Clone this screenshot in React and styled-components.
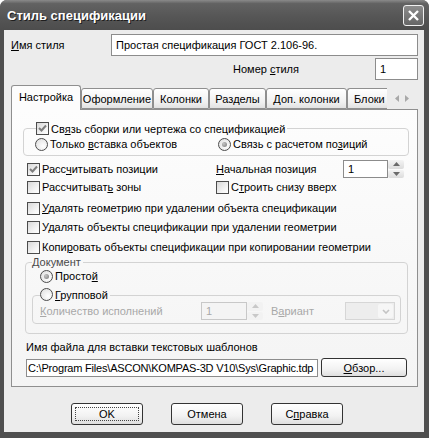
import React from "react";
import styled, { createGlobalStyle } from "styled-components";

const GlobalStyle = createGlobalStyle`
  html, body {
    margin: 0;
    padding: 0;
    background: #ffffff;
  }
  body {
    font-family: "Liberation Sans", Arial, sans-serif;
    font-size: 11px;
    color: #000;
  }
  * {
    box-sizing: border-box;
  }
`;

const Window = styled.div`
  width: 429px;
  height: 438px;
  display: flex;
  flex-direction: column;
  background: #4f4f4f;
  border-radius: 7px 7px 0 0;
  overflow: hidden;
`;

const TitleBar = styled.div`
  height: 30px;
  flex: none;
  display: flex;
  align-items: center;
  justify-content: space-between;
  padding: 0 5px 0 7px;
  background: linear-gradient(#8a8a8a 0%, #626262 12%, #565656 55%, #4d4d4d 100%);
`;

const Title = styled.span`
  font-weight: bold;
  font-size: 13px;
  color: #ffffff;
  text-shadow: 1px 1px 0 #1e1e1e;
`;

const CloseButton = styled.div`
  width: 21px;
  height: 21px;
  border: 1px solid #f0f0f0;
  border-radius: 3px;
  background: linear-gradient(#8c8c8c, #666666);
  display: flex;
  align-items: center;
  justify-content: center;
`;

const Client = styled.div`
  flex: 1;
  margin: 0 5px 6px 4px;
  background: #ececec;
  padding: 4px 6px 0 7px;
  display: flex;
  flex-direction: column;
`;

const FieldRow = styled.div`
  display: flex;
  align-items: center;
  justify-content: ${({ end }) => (end ? "flex-end" : "flex-start")};
  margin-top: ${({ mt }) => mt || 0}px;
`;

const Label = styled.span`
  width: ${({ w }) => (w ? `${w}px` : "auto")};
  margin-right: ${({ mr }) => mr || 0}px;
  margin-left: ${({ ml }) => ml || 0}px;
  color: ${({ disabled }) => (disabled ? "#a8a8a8" : "#000")};
  white-space: nowrap;
`;

const TextBox = styled.div`
  width: ${({ w }) => (w ? `${w}px` : "auto")};
  flex: ${({ w }) => (w ? "none" : 1)};
  height: ${({ h }) => h || 22}px;
  border: 1px solid ${({ disabled }) => (disabled ? "#c8c8c8" : "#8c8c8c")};
  background: ${({ disabled }) => (disabled ? "#f4f4f4" : "#ffffff")};
  color: ${({ disabled }) => (disabled ? "#a8a8a8" : "#000")};
  padding: 0 ${({ px }) => (px === undefined ? 4 : px)}px;
  letter-spacing: ${({ tight }) => (tight ? "-0.2px" : "normal")};
  display: flex;
  align-items: center;
  white-space: nowrap;
  overflow: hidden;
`;

const U = styled.span`
  text-decoration: underline;
`;

/* tabs */
const TabStrip = styled.div`
  display: flex;
  align-items: flex-end;
  height: 25px;
  margin-top: 4px;
  position: relative;
  z-index: 1;
`;

const Tab = styled.div`
  width: ${({ w }) => w}px;
  height: ${({ active }) => (active ? 25 : 21)}px;
  margin-bottom: ${({ active }) => (active ? -1 : 0)}px;
  border: 1px solid #8f8f8f;
  border-bottom: ${({ active }) => (active ? "none" : "1px solid #8f8f8f")};
  border-right: ${({ cut }) => (cut ? "none" : "1px solid #8f8f8f")};
  border-radius: ${({ cut }) => (cut ? "3px 0 0 0" : "3px 3px 0 0")};
  background: ${({ active }) =>
    active ? "#fcfcfc" : "linear-gradient(#ffffff, #f0f0f0 70%, #e2e2e2)"};
  display: flex;
  align-items: center;
  justify-content: ${({ cut }) => (cut ? "flex-start" : "center")};
  padding: ${({ cut }) => (cut ? "0 0 0 6px" : "0")};
  padding-bottom: ${({ active }) => (active ? 3 : 0)}px;
  overflow: hidden;
  white-space: nowrap;
`;

const TabScroll = styled.div`
  width: 30px;
  height: 21px;
  display: flex;
  align-items: center;
  justify-content: center;
  gap: 6px;
  background: #ececec;
`;

const Panel = styled.div`
  height: 278px;
  border: 1px solid #8f8f8f;
  background: linear-gradient(#fdfdfd, #f4f4f4);
  display: flex;
  flex-direction: column;
`;

const Group = styled.fieldset`
  margin: ${({ mt }) => mt || 0}px ${({ mr }) => mr || 0}px ${({ mb }) => mb || 0}px
    ${({ ml }) => ml || 0}px;
  padding: 0 0 ${({ pb }) => pb || 0}px ${({ pl }) => pl || 0}px;
  border: 1px solid #d3d3d3;
  border-radius: 4px;
  min-width: 0;
`;

const Legend = styled.legend`
  margin-left: ${({ ml }) => ml || 0}px;
  padding: 0 2px 0 0;
  color: ${({ muted }) => (muted ? "#4a4a4a" : "#000")};
`;

const OptionRow = styled.div`
  display: flex;
  align-items: center;
  height: ${({ h }) => h || 14}px;
  margin-top: ${({ mt }) => mt || 0}px;
  margin-left: ${({ ml }) => ml || 0}px;
`;

const Cell = styled.div`
  width: ${({ w }) => w}px;
  flex: none;
  display: flex;
  align-items: center;
`;

const Option = styled.label`
  display: inline-flex;
  align-items: center;
  gap: 2px;
  white-space: nowrap;
  color: ${({ disabled }) => (disabled ? "#a8a8a8" : "#000")};
`;

const Box = styled.span`
  width: 13px;
  height: 13px;
  flex: none;
  border: 1px solid #4c4c4c;
  background: linear-gradient(135deg, #d8d8d8, #f6f6f6 70%, #ffffff);
  display: flex;
  align-items: center;
  justify-content: center;
`;

const Circle = styled.span`
  width: 13px;
  height: 13px;
  flex: none;
  border: 1px solid #4c4c4c;
  border-radius: 50%;
  background: radial-gradient(circle at 65% 65%, #ffffff, #dcdcdc);
  display: flex;
  align-items: center;
  justify-content: center;
`;

const Dot = styled.span`
  width: 5px;
  height: 5px;
  border-radius: 50%;
  background: radial-gradient(circle at 35% 35%, #c4c4c4, #7c7c7c);
`;

const Spin = styled.div`
  width: 16px;
  height: ${({ h }) => h || 18}px;
  display: flex;
  flex-direction: column;
  gap: 1px;
  flex: none;
`;

const SpinHalf = styled.div`
  flex: 1;
  border-radius: 2px;
  background: ${({ disabled }) =>
    disabled ? "#f2f2f2" : "linear-gradient(#f4f4f4, #dcdcdc)"};
  display: flex;
  align-items: center;
  justify-content: center;
`;

const Combo = styled.div`
  width: 50px;
  height: 18px;
  border: 1px solid #d6d6d6;
  background: #ededed;
  display: flex;
  justify-content: flex-end;
  padding: 1px;
`;

const ComboButton = styled.div`
  width: 15px;
  background: #f6f6f6;
  border-radius: 2px;
  display: flex;
  align-items: center;
  justify-content: center;
`;

const PathRow = styled.div`
  display: flex;
  align-items: center;
  margin: 4px 0 0 14px;
  gap: 3px;
`;

const Button = styled.div`
  width: ${({ w }) => w}px;
  height: ${({ h }) => h || 22}px;
  border: 1px solid #333333;
  border-radius: 3px;
  background: linear-gradient(#ffffff, #f2f2f2 60%, #dedede);
  display: flex;
  align-items: center;
  justify-content: center;
  position: relative;
  white-space: nowrap;
`;

const Focus = styled.span`
  position: absolute;
  inset: 3px;
  border: 1px dotted #444;
`;

const ButtonRow = styled.div`
  display: flex;
  gap: 28px;
  margin: 16px 0 0 60px;
`;

const Check = () => (
  <svg width="9" height="9" viewBox="0 0 9 9">
    <path d="M1 4 L3.5 6.5 L8 1.5" fill="none" stroke="#7e7e7e" strokeWidth="2" />
  </svg>
);

const CheckBox = ({ checked, children, disabled }) => (
  <Option disabled={disabled}>
    <Box>{checked && <Check />}</Box>
    <span>{children}</span>
  </Option>
);

const Radio = ({ checked, children, disabled }) => (
  <Option disabled={disabled}>
    <Circle>{checked && <Dot />}</Circle>
    <span>{children}</span>
  </Option>
);

const Arrow = ({ dir, color = "#6a6a6a" }) => {
  const d = {
    up: "M0 4 L3.5 0 L7 4 Z",
    down: "M0 0 L3.5 4 L7 0 Z",
  }[dir];
  return (
    <svg width="7" height="4" viewBox="0 0 7 4">
      <path d={d} fill={color} />
    </svg>
  );
};

const SideArrow = ({ dir }) => (
  <svg width="4" height="7" viewBox="0 0 4 7">
    <path d={dir === "left" ? "M4 0 L0 3.5 L4 7 Z" : "M0 0 L4 3.5 L0 7 Z"} fill="#a8a8a8" />
  </svg>
);

const tabs = [
  { t: "Оформление", w: 72 },
  { t: "Колонки", w: 56 },
  { t: "Разделы", w: 57 },
  { t: "Доп. колонки", w: 81 },
];

const App = () => (
  <>
    <GlobalStyle />
    <Window>
      <TitleBar>
        <Title>Стиль спецификации</Title>
        <CloseButton>
          <svg width="11" height="11" viewBox="0 0 11 11">
            <path d="M1 1 L10 10 M10 1 L1 10" stroke="#fff" strokeWidth="2.4" />
          </svg>
        </CloseButton>
      </TitleBar>
      <Client>
        <FieldRow>
          <Label w={100}>
            <U>И</U>мя стиля
          </Label>
          <TextBox>Простая спецификация ГОСТ 2.106-96.</TextBox>
        </FieldRow>
        <FieldRow end mt={2}>
          <Label mr={76}>
            Номер <U>с</U>тиля
          </Label>
          <TextBox w={43}>1</TextBox>
        </FieldRow>

        <TabStrip>
          <Tab active w={70}>
            Настройка
          </Tab>
          {tabs.map((tab) => (
            <Tab key={tab.t} w={tab.w}>
              {tab.t}
            </Tab>
          ))}
          <Tab cut w={40}>
            Блоки
          </Tab>
          <TabScroll>
            <SideArrow dir="left" />
            <SideArrow dir="right" />
          </TabScroll>
        </TabStrip>

        <Panel>
          <Group mt={12} ml={11} mr={8} pb={4} pl={11}>
            <Legend ml={1}>
              <CheckBox checked>
                Св<U>я</U>зь сборки или чертежа со спецификацией
              </CheckBox>
            </Legend>
            <OptionRow mt={2}>
              <Cell w={183}>
                <Radio>
                  Только <U>в</U>ставка объектов
                </Radio>
              </Cell>
              <Radio checked>
                Связь с расчетом по<U>з</U>иций
              </Radio>
            </OptionRow>
          </Group>

          <OptionRow h={18} mt={4} ml={15}>
            <Cell w={189}>
              <CheckBox checked>
                Расс<U>ч</U>итывать позиции
              </CheckBox>
            </Cell>
            <Cell w={127}>
              <Label>
                <U>Н</U>ачальная позиция
              </Label>
            </Cell>
            <TextBox w={45} h={18}>
              1
            </TextBox>
            <Spin>
              <SpinHalf>
                <Arrow dir="up" />
              </SpinHalf>
              <SpinHalf>
                <Arrow dir="down" />
              </SpinHalf>
            </Spin>
          </OptionRow>
          <OptionRow mt={2} ml={15}>
            <Cell w={189}>
              <CheckBox>
                Рассчитыват<U>ь</U> зоны
              </CheckBox>
            </Cell>
            <CheckBox>
              С<U>т</U>роить снизу вверх
            </CheckBox>
          </OptionRow>
          <OptionRow mt={7} ml={15}>
            <CheckBox>
              <U>У</U>далять геометрию при удалении объекта спецификации
            </CheckBox>
          </OptionRow>
          <OptionRow mt={5} ml={15}>
            <CheckBox>
              У<U>д</U>алять объекты спецификации при удалении геометрии
            </CheckBox>
          </OptionRow>
          <OptionRow mt={6} ml={15}>
            <CheckBox>
              Копи<U>р</U>овать объекты спецификации при копировании геометрии
            </CheckBox>
          </OptionRow>

          <Group mt={2} ml={13} mr={9} pl={6}>
            <Legend ml={0} muted>
              Документ
            </Legend>
            <OptionRow mt={1} ml={8}>
              <Radio checked>
                Просто<U>й</U>
              </Radio>
            </OptionRow>
            <Group mt={5} ml={0} mr={6} mb={9} pb={3} pl={7}>
              <Legend ml={0}>
                <Radio>
                  <U>Г</U>рупповой
                </Radio>
              </Legend>
              <OptionRow h={18} mt={-1}>
                <Cell w={161}>
                  <Label disabled>
                    <U>К</U>оличество исполнений
                  </Label>
                </Cell>
                <TextBox w={46} h={18} disabled>
                  1
                </TextBox>
                <Spin>
                  <SpinHalf disabled>
                    <Arrow dir="up" color="#c8c8c8" />
                  </SpinHalf>
                  <SpinHalf disabled>
                    <Arrow dir="down" color="#c8c8c8" />
                  </SpinHalf>
                </Spin>
                <Cell w={82}>
                  <Label disabled ml={8}>
                    В<U>а</U>риант
                  </Label>
                </Cell>
                <Combo>
                  <ComboButton>
                    <svg width="8" height="5" viewBox="0 0 8 5">
                      <path d="M1 1 L4 4 L7 1" fill="none" stroke="#c4c4c4" strokeWidth="1.6" />
                    </svg>
                  </ComboButton>
                </Combo>
              </OptionRow>
            </Group>
          </Group>

          <OptionRow mt={6} ml={14}>
            <Label>Имя файла для вставки текстовых шаблонов</Label>
          </OptionRow>
          <PathRow>
            <TextBox w={292} h={18} px={1} tight>
              C:\Program Files\ASCON\KOMPAS-3D V10\Sys\Graphic.tdp
            </TextBox>
            <Button w={86} h={19}>
              <span>
                <U>О</U>бзор...
              </span>
            </Button>
          </PathRow>
        </Panel>

        <ButtonRow>
          <Button w={72}>
            <Focus />
            OK
          </Button>
          <Button w={72}>Отмена</Button>
          <Button w={72}>
            <span>
              С<U>п</U>равка
            </span>
          </Button>
        </ButtonRow>
      </Client>
    </Window>
  </>
);

export default App;
